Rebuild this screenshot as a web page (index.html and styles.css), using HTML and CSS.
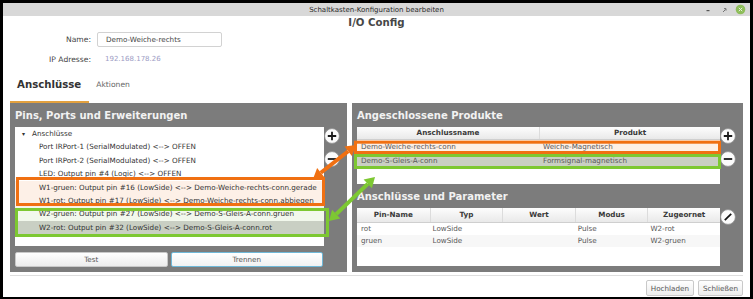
FILE: index.html
```html
<!DOCTYPE html>
<html lang="de">
<head>
<meta charset="utf-8">
<title>Schaltkasten-Konfiguration bearbeiten</title>
<link rel="stylesheet" href="styles.css">
</head>
<body>
<div class="window">
  <div class="titlebar">
    <span></span>
    <span class="wtitle">Schaltkasten-Konfiguration bearbeiten</span>
    <div class="wctl">
      <svg class="wbtn" width="10" height="10" viewBox="0 0 10 10"><rect x="3.5" y="5" width="3" height="1.2" fill="#555"/></svg>
      <svg class="wbtn" width="10" height="10" viewBox="0 0 10 10"><path d="M4 7 L6.5 4.5 M5 3.6 H7 V5.6" stroke="#666" stroke-width="0.9" fill="none"/></svg>
      <svg class="wbtn" width="11" height="11" viewBox="0 0 11 11"><circle cx="5.5" cy="5.5" r="4.8" fill="#8dbd59"/><path d="M3.8 3.8 L7.2 7.2 M7.2 3.8 L3.8 7.2" stroke="#e8f3dc" stroke-width="1"/></svg>
    </div>
  </div>
  <div class="content">
    <h1 class="heading">I/O Config</h1>
    <div class="form">
      <div class="frow"><label class="flabel">Name:</label><div class="input">Demo-Weiche-rechts</div></div>
      <div class="frow frow-ip"><label class="flabel">IP Adresse:</label><span class="ip">192.168.178.26</span></div>
    </div>
    <div class="tabs">
      <span class="tab active">Anschlüsse</span>
      <span class="tab">Aktionen</span>
    </div>
    <div class="panels">
      <section class="panel pleft">
        <h2 class="ptitle">Pins, Ports und Erweiterungen</h2>
        <div class="pbody">
          <div class="tree">
            <div class="trow root"><span class="tog">▾</span>Anschlüsse</div>
            <div class="trow child">Port IRPort-1 (SerialModulated) &lt;--&gt; OFFEN</div>
            <div class="trow child">Port IRPort-2 (SerialModulated) &lt;--&gt; OFFEN</div>
            <div class="trow child">LED: Output pin #4 (Logic) &lt;--&gt; OFFEN</div>
            <div class="trow child peach">W1-gruen: Output pin #16 (LowSide) &lt;--&gt; Demo-Weiche-rechts-conn.gerade</div>
            <div class="trow child peach">W1-rot: Output pin #17 (LowSide) &lt;--&gt; Demo-Weiche-rechts-conn.abbiegen</div>
            <div class="trow child mint">W2-gruen: Output pin #27 (LowSide) &lt;--&gt; Demo-S-Gleis-A-conn.gruen</div>
            <div class="trow child sel">W2-rot: Output pin #32 (LowSide) &lt;--&gt; Demo-S-Gleis-A-conn.rot</div>
          </div>
          <div class="side">
            <svg class="cbtn" width="16" height="16" viewBox="0 0 16 16"><circle cx="8" cy="8" r="7.4" class="cfill"/><path d="M8 3.8 V12.2 M3.8 8 H12.2" stroke="#1a1a1a" stroke-width="1.8"/></svg>
            <svg class="cbtn" width="16" height="16" viewBox="0 0 16 16"><circle cx="8" cy="8" r="7.4" class="cfill"/><path d="M3.8 8 H12.2" stroke="#1a1a1a" stroke-width="1.8"/></svg>
          </div>
        </div>
        <div class="brow">
          <button class="btn wide">Test</button>
          <button class="btn wide focus">Trennen</button>
        </div>
      </section>
      <section class="panel pright">
        <h2 class="ptitle">Angeschlossene Produkte</h2>
        <div class="pbody">
          <div class="tbl tbl1">
            <div class="thead c2"><span>Anschlussname</span><span>Produkt</span></div>
            <div class="tr c2 peach"><span>Demo-Weiche-rechts-conn</span><span>Weiche-Magnetisch</span></div>
            <div class="tr c2 sel"><span>Demo-S-Gleis-A-conn</span><span>Formsignal-magnetisch</span></div>
          </div>
          <div class="side">
            <svg class="cbtn" width="16" height="16" viewBox="0 0 16 16"><circle cx="8" cy="8" r="7.4" class="cfill"/><path d="M8 3.8 V12.2 M3.8 8 H12.2" stroke="#1a1a1a" stroke-width="1.8"/></svg>
            <svg class="cbtn" width="16" height="16" viewBox="0 0 16 16"><circle cx="8" cy="8" r="7.4" class="cfill"/><path d="M3.8 8 H12.2" stroke="#1a1a1a" stroke-width="1.8"/></svg>
          </div>
        </div>
        <h2 class="ptitle">Anschlüsse und Parameter</h2>
        <div class="pbody">
          <div class="tbl tbl2">
            <div class="thead c5"><span>Pin-Name</span><span>Typ</span><span>Wert</span><span>Modus</span><span>Zugeornet</span></div>
            <div class="tr c5"><span>rot</span><span>LowSide</span><span></span><span>Pulse</span><span>W2-rot</span></div>
            <div class="tr c5 alt"><span>gruen</span><span>LowSide</span><span></span><span>Pulse</span><span>W2-gruen</span></div>
          </div>
          <div class="side side2">
            <svg class="cbtn" width="16" height="16" viewBox="0 0 16 16"><circle cx="8" cy="8" r="7.4" class="cfill"/><path d="M4.8 11.2 L11.2 4.8" stroke="#111" stroke-width="1.7"/></svg>
          </div>
        </div>
      </section>
    </div>
    <div class="sep"></div>
    <div class="footer">
      <button class="btn">Hochladen</button>
      <button class="btn">Schließen</button>
    </div>
  </div>
</div>
<svg class="overlay" width="753" height="299" viewBox="0 0 753 299">
  <rect x="17.5" y="178.5" width="306" height="26" fill="none" stroke="#f07012" stroke-width="3"/>
  <rect x="16.5" y="209.5" width="311" height="26" fill="none" stroke="#7dc832" stroke-width="3"/>
  <rect x="355.5" y="142.2" width="364" height="10.3" fill="none" stroke="#f07012" stroke-width="3"/>
  <rect x="355.5" y="155.5" width="364" height="12" fill="none" stroke="#7dc832" stroke-width="3"/>
  <line x1="320.85" y1="172.8" x2="348.15" y2="151.2" stroke="#f07012" stroke-width="4"/>
  <polygon points="356,145 351.87,155.91 344.43,146.49" fill="#f07012"/>
  <polygon points="313,179 324.57,177.51 317.13,168.09" fill="#f07012"/>
  <line x1="336.23" y1="214.09" x2="367.77" y2="183.91" stroke="#7dc832" stroke-width="4"/>
  <polygon points="375,177 371.92,188.25 363.62,179.58" fill="#7dc832"/>
  <polygon points="329,221 340.38,218.43 332.08,209.75" fill="#7dc832"/>
</svg>
</body>
</html>
```
FILE: styles.css
```css
* { box-sizing: border-box; margin: 0; padding: 0; }
html, body { width: 753px; height: 299px; overflow: hidden; background: #000; }
body {
  font-family: "DejaVu Sans", "Noto Sans", sans-serif;
  font-size: 7.2px;
  color: #333;
  position: relative;
  padding: 3px 3px 2px 3px;
}
.window {
  width: 747px;
  height: 294px;
  background: #fff;
  display: flex;
  flex-direction: column;
}
.titlebar {
  height: 13px;
  flex: none;
  background: #d8d8d8;
  display: grid;
  grid-template-columns: 1fr auto 1fr;
  align-items: center;
  font-size: 7px;
  color: #2a2a2a;
}
.wctl { justify-self: end; display: flex; align-items: center; gap: 6px; padding-right: 4px; }
.wbtn { display: block; }
.content { flex: 1; padding: 0 7px; display: flex; flex-direction: column; }
.heading {
  font-size: 10.2px;
  font-weight: bold;
  color: #474747;
  text-align: center;
  height: 14px;
  line-height: 14px;
  margin-top: 0;
}
.form { margin-top: 2px; }
.frow { display: flex; align-items: center; height: 15px; }
.frow-ip { margin-top: 5px; height: 14px; }
.flabel { width: 87px; text-align: right; font-size: 7.6px; color: #444; padding-right: 6px; }
.input {
  width: 125px;
  height: 15px;
  border: 1px solid #d2d2d2;
  border-radius: 2px;
  padding-left: 8px;
  line-height: 13px;
  color: #444;
  background: #fff;
}
.ip { color: #9c9cc4; padding-left: 8px; font-size: 7px; }
.tabs { height: 37px; display: flex; align-items: flex-end; }
.tab {
  padding: 0 8px 8px 7px;
  border-bottom: 2px solid transparent;
  line-height: 16px;
  font-size: 7.6px;
  color: #666;
}
.tab.active {
  font-size: 10.2px;
  font-weight: bold;
  color: #333;
  border-bottom-color: #e3a13f;
}
.panels { display: flex; gap: 5px; height: 169px; }
.panel { background: #7c7c7c; padding: 0 0 5px 5px; display: flex; flex-direction: column; }
.pleft { width: 337px; }
.pright { width: 391px; }
.ptitle {
  font-size: 10px;
  font-weight: bold;
  color: #f2f2f2;
  height: 24px;
  line-height: 25px;
}
.pbody { display: flex; }
.tree { width: 309px; height: 119px; background: #fff; }
.trow { height: 13.4px; line-height: 13.4px; white-space: nowrap; color: #333; }
.root { padding-left: 7px; }
.tog { display: inline-block; width: 10px; font-size: 6px; }
.child { padding-left: 24px; }
.peach { background: #fdf0e7; }
.mint { background: #f2f8ec; }
.sel { background: #c9cfc3; }
.side { width: 23px; display: flex; flex-direction: column; gap: 7px; padding-left: 0; padding-top: 1px; }
.side2 { padding-top: 1px; }
.cbtn { display: block; }
.cfill { fill: #fbfbfb; stroke: #8a8a8a; stroke-width: 0.8; }
.brow { display: flex; gap: 3px; margin-top: 6px; width: 308px; }
.btn {
  font-family: "DejaVu Sans", sans-serif;
  font-size: 7.2px;
  color: #555;
  height: 15px;
  border: 1px solid #c9c9c9;
  border-radius: 2px;
  background: linear-gradient(#ffffff, #ececec);
  padding: 0 5px;
}
.wide { flex: 1; }
.btn.focus { border-color: #6fb8d8; background: linear-gradient(#ffffff, #f1f1f1); }
.tbl { width: 363px; background: #fff; }
.tbl1 { height: 57px; }
.tbl2 { height: 58px; }
.thead {
  display: grid;
  background: linear-gradient(#fdfdfd, #e9e9e9);
  border-bottom: 1px solid #cfcfcf;
  font-weight: bold;
  color: #3a3a3a;
}
.thead span { text-align: center; border-left: 1px solid #dcdcdc; }
.thead span:first-child { border-left: none; }
.c2 { grid-template-columns: 182px 1fr; }
.c5 { grid-template-columns: repeat(5, 1fr); }
.tbl1 .thead { height: 13px; line-height: 12px; }
.tbl2 .thead { height: 15px; line-height: 14px; }
.tr { display: grid; color: #585858; }
.tr span { padding-left: 4px; white-space: nowrap; }
.tbl1 .tr { height: 13.5px; line-height: 13.5px; }
.tbl2 .tr { height: 12px; line-height: 12px; }
.tbl2 .tr span:nth-child(n+2) { padding-left: 3px; }
.alt { background: #f7f7f7; }
.sep { height: 1px; background: #dedede; margin-top: 3px; }
.footer { display: flex; justify-content: flex-end; gap: 4px; margin-top: 4px; }
.footer .btn { height: 16px; padding: 0 4px; }
.overlay { position: absolute; left: 0; top: 0; pointer-events: none; }
```
